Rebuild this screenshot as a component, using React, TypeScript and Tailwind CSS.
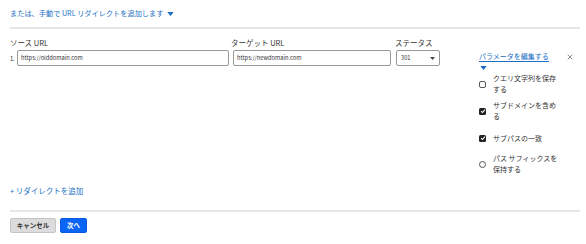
import { X } from 'lucide-react'

const font = { fontFamily: '"Noto Sans CJK JP", "Noto Sans", sans-serif' }

function Caret({ className = '' }: { className?: string }) {
    return (
        <svg viewBox="0 0 8 5" className={className} width="7" height="4">
            <path d="M0 0 L8 0 L4 5 Z" fill="currentColor" />
        </svg>
    )
}

function Option({ label, checked, round, className = '' }: { label: string; checked?: boolean; round?: boolean; className?: string }) {
    return (
        <div className={`flex items-center gap-[7px] min-h-[22px] ${className}`}>
            {checked ? (
                <span className="w-[7px] h-[7px] rounded-[1.5px] bg-[#222] flex items-center justify-center shrink-0">
                    <svg viewBox="0 0 8 8" width="6" height="6">
                        <path d="M1.5 4.2 L3.3 6 L6.6 2.2" stroke="white" strokeWidth="1.4" fill="none" />
                    </svg>
                </span>
            ) : (
                <span
                    className={`w-[7px] h-[7px] border border-[#555] shrink-0 ${round ? 'rounded-full' : 'rounded-[2px]'}`}
                />
            )}
            <span className="w-[65px] text-[7px] leading-[11px] text-[#333]">{label}</span>
        </div>
    )
}

export default function App() {
    return (
        <div className="w-[586px] h-[244px] bg-white px-[10px] flex flex-col" style={font}>
            <div className="h-[27px] flex items-center gap-[4px] text-[7.2px] text-[#1a6fc4]">
                <span>または、手動で URL リダイレクトを追加します</span>
                <Caret className="text-[#1a6fc4]" />
            </div>
            <div className="h-[2px] bg-[#e6e6e6] w-[570px]" />

            <div className="flex h-[150px]">
                <div className="flex pt-[7px]">
                    <div className="flex flex-col w-[221px]">
                        <span className="h-[13px] text-[7.5px] text-[#333] leading-[13px]">ソース URL</span>
                        <div className="flex items-center mt-[1px]">
                            <span className="w-[7px] text-[6px] text-[#333]">1.</span>
                            <div className="w-[212px] h-[16px] border border-[#999] rounded-[2px] px-[3px] flex items-center text-[5.7px] text-[#333]">
                                https://olddomain.com
                            </div>
                        </div>
                    </div>
                    <div className="flex flex-col w-[164px]">
                        <span className="h-[13px] text-[7.5px] text-[#333] leading-[13px]">ターゲット URL</span>
                        <div className="mt-[1px] ml-[2px] w-[158px] h-[16px] border border-[#999] rounded-[2px] px-[3px] flex items-center text-[5.7px] text-[#333]">
                            https://newdomain.com
                        </div>
                    </div>
                    <div className="flex flex-col w-[47px]">
                        <span className="h-[13px] text-[7.5px] text-[#333] leading-[13px]">ステータス</span>
                        <div className="mt-[1px] ml-[1px] w-[44px] h-[16px] border border-[#999] rounded-[2px] px-[4px] flex items-center justify-between text-[5.7px] text-[#333]">
                            <span>301</span>
                            <Caret className="text-[#444] w-[5px] h-[3px]" />
                        </div>
                    </div>
                </div>

                <div className="ml-[37px] pt-[22px] flex flex-col w-[105px]">
                    <div className="flex items-start justify-between">
                        <span className="text-[7px] leading-[11px] text-[#1a6fc4] underline underline-offset-[2px]">
                            パラメータを編集する
                        </span>
                        <X className="w-[8px] h-[8px] text-[#555] mt-[2px] mr-[2px]" strokeWidth={2} />
                    </div>
                    <Caret className="text-[#1a6fc4] ml-[1px] mt-[4px]" />
                    <div className="flex flex-col gap-[5px] mt-[3px]">
                        <Option label="クエリ文字列を保存する" />
                        <Option label="サブドメインを含める" checked />
                        <Option label="サブパスの一致" checked />
                        <Option label="パス サフィックスを保持する" round className="-mt-[1px]" />
                    </div>
                </div>
            </div>

            <div className="h-[31px] pt-[6px] flex items-start text-[7.5px] text-[#1a6fc4]">
                <span>+ リダイレクトを追加</span>
            </div>
            <div className="h-[2px] bg-[#e6e6e6] w-[570px]" />
            <div className="flex gap-[4px] mt-[6px]">
                <button className="w-[46px] h-[15px] bg-[#dcdcdc] border border-[#c4c4c4] rounded-[2px] text-[6.5px] font-bold text-[#333]">
                    キャンセル
                </button>
                <button className="w-[27px] h-[15px] bg-[#0a64f5] border border-[#0a5ae0] rounded-[2px] text-[6.5px] font-bold text-white">
                    次へ
                </button>
            </div>
        </div>
    )
}
